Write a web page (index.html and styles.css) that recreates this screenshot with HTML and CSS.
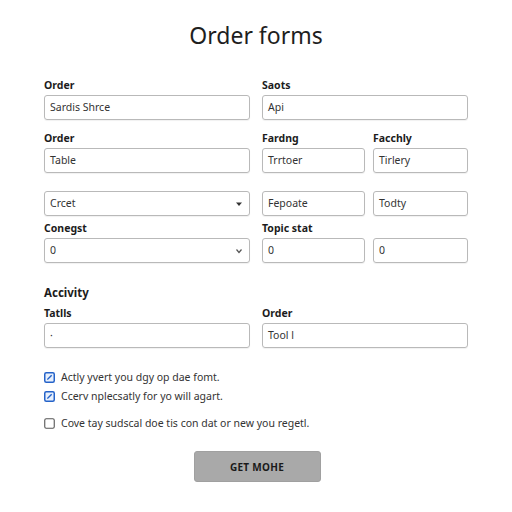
FILE: index.html
```html
<!DOCTYPE html>
<html>
<head>
<meta charset="utf-8">
<link rel="stylesheet" href="styles.css">
</head>
<body>
<div class="page">
  <h1 class="title">Order forms</h1>

  <div class="row r1">
    <div class="field wide">
      <div class="label">Order</div>
      <div class="input">Sardis Shrce</div>
    </div>
    <div class="field wide">
      <div class="label">Saots</div>
      <div class="input">Api</div>
    </div>
  </div>

  <div class="row r2">
    <div class="field wide">
      <div class="label">Order</div>
      <div class="input">Table</div>
    </div>
    <div class="field mid">
      <div class="label">Fardng</div>
      <div class="input">Trrtoer</div>
    </div>
    <div class="field small">
      <div class="label">Facchly</div>
      <div class="input">Tirlery</div>
    </div>
  </div>

  <div class="row r3">
    <div class="field wide">
      <div class="input select">Crcet
        <svg class="caret" width="8" height="6" viewBox="0 0 8 6"><path d="M1 1.5 L7 1.5 L4 5 Z" fill="#333"/></svg>
      </div>
    </div>
    <div class="field mid">
      <div class="input">Fepoate</div>
    </div>
    <div class="field small">
      <div class="input">Todty</div>
    </div>
  </div>

  <div class="row r4">
    <div class="field wide">
      <div class="label">Conegst</div>
      <div class="input select">0
        <svg class="caret" width="8" height="6" viewBox="0 0 8 6"><path d="M1.5 1.5 L4 4.5 L6.5 1.5" fill="none" stroke="#555" stroke-width="1.2"/></svg>
      </div>
    </div>
    <div class="field mid">
      <div class="label">Topic stat</div>
      <div class="input">0</div>
    </div>
    <div class="field small">
      <div class="label">&nbsp;</div>
      <div class="input">0</div>
    </div>
  </div>

  <div class="section">Accivity</div>

  <div class="row r5">
    <div class="field wide">
      <div class="label">Tatlls</div>
      <div class="input">·</div>
    </div>
    <div class="field wide">
      <div class="label">Order</div>
      <div class="input">Tool l</div>
    </div>
  </div>

  <div class="checks">
    <div class="check c1">
      <svg class="box" width="11" height="11" viewBox="0 0 11 11"><rect x="0.75" y="0.75" width="9.5" height="9.5" rx="1.5" fill="#e8f0fc" stroke="#2563c9" stroke-width="1.5"/><path d="M3 8 L3.4 6.6 L7.2 2.8 L8.2 3.8 L4.4 7.6 Z" fill="#2563c9"/></svg>
      <span>Actly yvert you dgy op dae fomt.</span>
    </div>
    <div class="check c2">
      <svg class="box" width="11" height="11" viewBox="0 0 11 11"><rect x="0.75" y="0.75" width="9.5" height="9.5" rx="1.5" fill="#e8f0fc" stroke="#2563c9" stroke-width="1.5"/><path d="M3 8 L3.4 6.6 L7.2 2.8 L8.2 3.8 L4.4 7.6 Z" fill="#2563c9"/></svg>
      <span>Ccerv nplecsatly for yo will agart.</span>
    </div>
    <div class="check c3">
      <svg class="box" width="11" height="11" viewBox="0 0 11 11"><rect x="0.75" y="0.75" width="9.5" height="9.5" rx="1.5" fill="#fff" stroke="#555" stroke-width="1.1"/></svg>
      <span>Cove tay sudscal doe tis con dat or new you regetl.</span>
    </div>
  </div>

  <div class="actions">
    <div class="btn">GET MOHE</div>
  </div>
</div>
</body>
</html>
```
FILE: styles.css
```css
html, body {
  margin: 0;
  padding: 0;
  background: #ffffff;
}
body {
  font-family: "Noto Sans", "Open Sans", sans-serif;
  color: #222;
}
.page {
  width: 424px;
  margin: 0 auto;
  display: flex;
  flex-direction: column;
}
.title {
  margin: 19px 0 0 0;
  height: 32px;
  line-height: 32px;
  font-size: 23px;
  font-weight: 400;
  text-align: center;
  color: #1e1e1e;
}
.row {
  display: flex;
  gap: 12px;
}
.r1 { margin-top: 27px; }
.r2 { margin-top: 11px; }
.r3 { margin-top: 18px; }
.r4 { margin-top: 5px; }
.r5 { margin-top: 5px; }
.field {
  display: flex;
  flex-direction: column;
}
.field.wide { width: 206px; }
.field.mid { width: 103px; }
.field.small { width: 95px; margin-left: -4px; }
.label {
  font-size: 10.5px;
  font-weight: 700;
  line-height: 14px;
  height: 14px;
  margin-bottom: 3px;
  color: #1c1c1c;
}
.input {
  box-sizing: border-box;
  height: 25px;
  border: 1px solid #b9b9b9;
  border-radius: 3px;
  box-shadow: 0 1px 1px rgba(0,0,0,0.06);
  padding: 0 5px;
  font-size: 10.5px;
  line-height: 23px;
  color: #333;
  display: flex;
  align-items: center;
  justify-content: space-between;
}
.caret { margin-right: 1px; }
.section {
  margin-top: 22px;
  font-size: 11.5px;
  font-weight: 700;
  line-height: 16px;
  color: #1c1c1c;
}
.checks {
  display: flex;
  flex-direction: column;
  margin-top: 21px;
}
.check {
  display: flex;
  align-items: center;
  gap: 6px;
  height: 16px;
  font-size: 10.5px;
  color: #333;
}
.c2 { margin-top: 3px; }
.c3 { margin-top: 11px; }
.box { flex: none; }
.actions {
  display: flex;
  justify-content: center;
  margin-top: 20px;
}
.btn {
  box-sizing: border-box;
  width: 127px;
  height: 31px;
  margin-left: 2px;
  background: #a9a9a9;
  border: 1px solid #a0a0a0;
  border-radius: 3px;
  font-size: 10px;
  font-weight: 700;
  letter-spacing: 0.3px;
  color: #1a1a1a;
  display: flex;
  align-items: center;
  justify-content: center;
}
```
